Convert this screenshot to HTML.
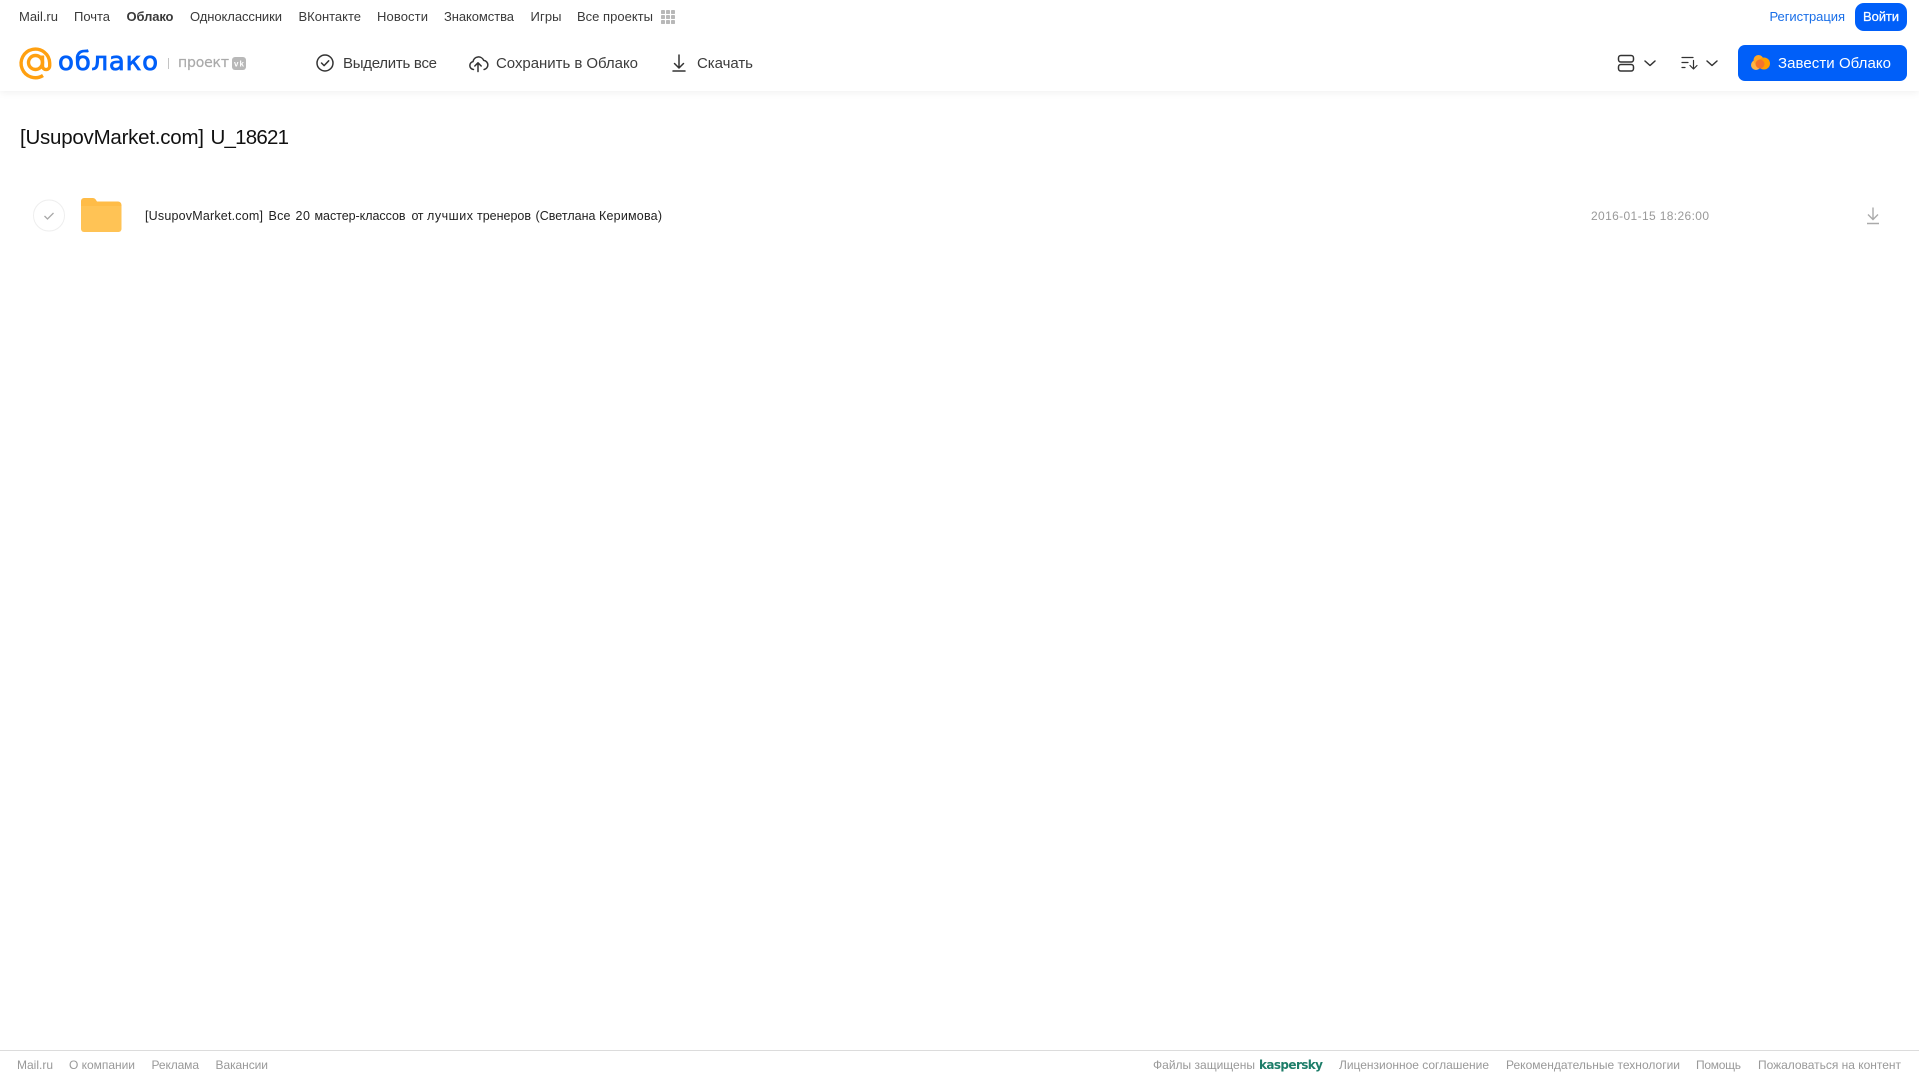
<!DOCTYPE html>
<html lang="ru">
<head>
<meta charset="utf-8">
<title>[UsupovMarket.com] U_18621</title>
<style>
html,body{margin:0;padding:0;width:1919px;height:1079px;overflow:hidden;background:#fff}
.hdr{position:absolute;left:0;top:0;width:1919px;height:91px;background:#fff;box-shadow:0 1px 8px rgba(0,0,0,.07)}
svg{position:absolute;left:0;top:0}
text{font-family:"Liberation Sans",sans-serif;white-space:pre}
.n{font-size:13px;fill:#3a3a3a}
.a{font-size:15px;fill:#3c3c3c}
.f{font-size:12px;fill:#999}
.r{font-size:12.5px;fill:#222}
.ic{fill:none;stroke:#333;stroke-width:1.5;stroke-linecap:round;stroke-linejoin:round}
</style>
</head>
<body>
<div class="hdr"></div>
<svg width="1919" height="1079" viewBox="0 0 1919 1079" xmlns="http://www.w3.org/2000/svg">
  <!-- top nav -->
  <text class="n" x="19" y="21" textLength="39">Mail.ru</text>
  <text class="n" x="74" y="21" textLength="36">Почта</text>
  <text class="n" x="126.500" y="21" textLength="47" font-weight="700">Облако</text>
  <text class="n" x="190" y="21" textLength="92">Одноклассники</text>
  <text class="n" x="298.500" y="21" textLength="62.500">ВКонтакте</text>
  <text class="n" x="377" y="21" textLength="51">Новости</text>
  <text class="n" x="444" y="21" textLength="70">Знакомства</text>
  <text class="n" x="530.500" y="21" textLength="31">Игры</text>
  <text class="n" x="577" y="21" textLength="76">Все проекты</text>
  <g fill="#b8b8b8">
    <rect x="661" y="10" width="4" height="4" rx=".8"/><rect x="666" y="10" width="4" height="4" rx=".8"/><rect x="671" y="10" width="4" height="4" rx=".8"/>
    <rect x="661" y="15" width="4" height="4" rx=".8"/><rect x="666" y="15" width="4" height="4" rx=".8"/><rect x="671" y="15" width="4" height="4" rx=".8"/>
    <rect x="661" y="20" width="4" height="4" rx=".8"/><rect x="666" y="20" width="4" height="4" rx=".8"/><rect x="671" y="20" width="4" height="4" rx=".8"/>
  </g>
  <text class="n" x="1769.500" y="21" textLength="75.500" style="fill:#1a6fe8">Регистрация</text>
  <rect x="1855" y="3" width="52" height="28" rx="9" fill="#005ff9"/>
  <text class="n" x="1863" y="21" textLength="36" style="fill:#fff;stroke:#fff;stroke-width:.25">Войти</text>

  <!-- logo -->
  <g fill="none" stroke="#ffa010" stroke-width="3.400">
    <circle cx="35.500" cy="62.500" r="7"/>
    <path d="M42.500 55.500V66a3.600 3.600 0 0 0 7.200 0V63A14.300 14.300 0 1 0 43 75.500"/>
  </g>
  <text x="58" y="70" textLength="100" style="font-family:'DejaVu Sans',sans-serif;font-size:26px;fill:#005ff9;stroke:#005ff9;stroke-width:.8">облако</text>
  <rect x="168" y="58" width="1" height="11" fill="#c4c4c4"/>
  <text x="178" y="67" textLength="51" style="font-family:'DejaVu Sans',sans-serif;font-size:14px;fill:#aaa;stroke:#aaa;stroke-width:.2">проект</text>
  <rect x="232" y="57" width="14" height="13" rx="3" fill="#b8b8b8"/>
  <text x="234" y="66.500" textLength="10" style="font-size:8px;font-weight:700;fill:#fff">vk</text>

  <!-- actions -->
  <circle class="ic" cx="325" cy="63" r="8"/>
  <path class="ic" d="M321.500 63l2.600 2.600 4.600-4.800"/>
  <text class="a" x="343" y="68" textLength="94">Выделить все</text>

  <path class="ic" d="M473.500 69.500a4 4 0 0 1-.5-7.900 5.600 5.600 0 0 1 10.700-1.200 4.600 4.600 0 0 1 .4 9.100"/>
  <path class="ic" d="M478 71.500V63M474.800 66l3.200-3.200 3.200 3.200"/>
  <text class="a" x="496" y="68" textLength="142">Сохранить в Облако</text>

  <path class="ic" d="M679 55v13M674.500 63.500l4.500 4.500 4.500-4.500M673 71h12"/>
  <text class="a" x="697" y="68" textLength="56">Скачать</text>

  <!-- right controls -->
  <rect class="ic" x="1618.500" y="55.500" width="15" height="6.500" rx="2.400"/>
  <rect class="ic" x="1618.500" y="64.500" width="15" height="6.500" rx="2.400"/>
  <path class="ic" d="M1645 61l5 4.500 5-4.500"/>
  <path class="ic" style="stroke-width:1.200" d="M1682 57.500h11M1682 62.500h6M1682 67.500h3M1693.500 60.500v8M1690 65.500l3.500 3.500 3.500-3.500"/>
  <path class="ic" d="M1707 61l5 4.500 5-4.500"/>
  <rect x="1738" y="45" width="169" height="36" rx="7" fill="#005ff9"/>
  <circle cx="1756" cy="65" r="5" fill="#ffb347"/>
  <circle cx="1758.500" cy="60" r="5" fill="#ffa726"/>
  <circle cx="1764" cy="63.500" r="6" fill="#ff9e00"/>
  <circle cx="1760" cy="64" r="4.500" fill="#f4742b"/>
  <text class="a" x="1778" y="68" textLength="113" style="fill:#fff">Завести Облако</text>

  <!-- title -->
  <text x="20" y="144" textLength="184" style="font-size:20.500px;fill:#111">[UsupovMarket.com]</text>
  <text x="210.500" y="144" textLength="78.500" style="font-size:20.500px;fill:#111">U_18621</text>

  <!-- row -->
  <circle cx="49" cy="215.500" r="15.500" fill="#fff" stroke="#eeeeee" stroke-width="1"/>
  <path d="M44.500 216l3 3 6-6" fill="none" stroke="#a8a8a8" stroke-width="1.300"/>
  <path d="M81 201a3 3 0 0 1 3-3h9a3 3 0 0 1 2.500 1.300l1.500 2.200h21a3.500 3.500 0 0 1 3.500 3.500v3H81z" fill="#ffbc47"/>
  <path d="M81 206h40.500V229a3 3 0 0 1-3 3H84a3 3 0 0 1-3-3z" fill="#ffc355"/>
  <text class="r" x="145" y="220" textLength="118">[UsupovMarket.com]</text>
  <text class="r" x="268.500" y="220" textLength="22">Все</text>
  <text class="r" x="295.500" y="220" textLength="14.500">20</text>
  <text class="r" x="314.500" y="220" textLength="91">мастер-классов</text>
  <text class="r" x="411.500" y="220" textLength="12">от</text>
  <text class="r" x="427" y="220" textLength="46">лучших</text>
  <text class="r" x="477" y="220" textLength="54">тренеров</text>
  <text class="r" x="535.500" y="220" textLength="60">(Светлана</text>
  <text class="r" x="599" y="220" textLength="63">Керимова)</text>
  <text x="1591" y="220" textLength="118" style="font-size:12px;fill:#999">2016-01-15 18:26:00</text>
  <path d="M1873 207.500v12M1868 214.500l5 5 5-5M1867 223.500h12" fill="none" stroke="#aaa" stroke-width="1.400"/>

  <!-- footer -->
  <rect x="0" y="1050" width="1919" height="1" fill="#dcdcdc"/>
  <text class="f" x="17" y="1069" textLength="36">Mail.ru</text>
  <text class="f" x="69" y="1069" textLength="66">О компании</text>
  <text class="f" x="151.500" y="1069" textLength="47.500">Реклама</text>
  <text class="f" x="215.500" y="1069" textLength="52.500">Вакансии</text>
  <text class="f" x="1153" y="1069" textLength="102">Файлы защищены</text>
  <text x="1259" y="1069" textLength="64" style="font-family:'DejaVu Sans',sans-serif;font-size:12px;font-weight:700;fill:#1d7d69">kaspersky</text>
  <text class="f" x="1339" y="1069" textLength="150">Лицензионное соглашение</text>
  <text class="f" x="1506" y="1069" textLength="174">Рекомендательные технологии</text>
  <text class="f" x="1696" y="1069" textLength="45">Помощь</text>
  <text class="f" x="1758" y="1069" textLength="143">Пожаловаться на контент</text>
</svg>
</body>
</html>
